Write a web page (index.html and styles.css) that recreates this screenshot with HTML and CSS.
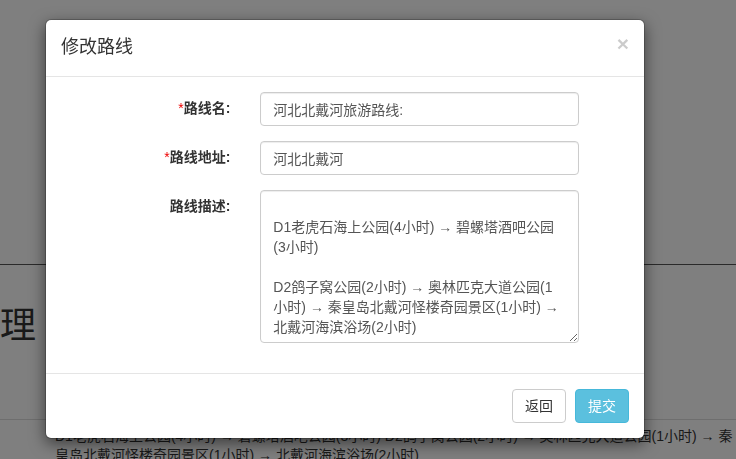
FILE: index.html
```html
<!DOCTYPE html>
<html lang="zh-CN">
<head>
<meta charset="utf-8">
<title>路线管理</title>
<link rel="stylesheet" href="styles.css">
</head>
<body>
<div class="page">
  <div class="page-top"></div>
  <h1 class="page-title">路线管理</h1>
  <table class="route-table">
    <tbody>
      <tr>
        <td>D1老虎石海上公园(4小时) → 碧螺塔酒吧公园(3小时) D2鸽子窝公园(2小时) → 奥林匹克大道公园(1小时) → 秦<br>皇岛北戴河怪楼奇园景区(1小时) → 北戴河海滨浴场(2小时)</td>
      </tr>
    </tbody>
  </table>
</div>

<div class="backdrop"></div>

<div class="modal">
  <div class="modal-header">
    <h4 class="modal-title">修改路线</h4>
    <button type="button" class="close">×</button>
  </div>
  <form class="modal-body">
    <div class="form-group">
      <label class="control-label"><span class="req">*</span>路线名:</label>
      <input class="form-control" type="text" value="河北北戴河旅游路线:">
    </div>
    <div class="form-group">
      <label class="control-label"><span class="req">*</span>路线地址:</label>
      <input class="form-control" type="text" value="河北北戴河">
    </div>
    <div class="form-group">
      <label class="control-label">路线描述:</label>
      <textarea class="form-control desc">

D1老虎石海上公园(4小时) → 碧螺塔酒吧公园
(3小时)

D2鸽子窝公园(2小时) → 奥林匹克大道公园(1
小时) → 秦皇岛北戴河怪楼奇园景区(1小时) →
北戴河海滨浴场(2小时)</textarea>
    </div>
  </form>
  <div class="modal-footer">
    <button type="button" class="btn btn-default">返回</button>
    <button type="button" class="btn btn-info">提交</button>
  </div>
</div>
</body>
</html>
```
FILE: styles.css
```css
* {
  box-sizing: border-box;
}

html, body {
  margin: 0;
  padding: 0;
  height: 100%;
  overflow: hidden;
}

body {
  font-family: "Liberation Sans", "Noto Sans CJK SC", sans-serif;
  font-size: 14px;
  line-height: 1.42857;
  color: #333;
  background: #fff;
}

/* page behind the dialog */
.page {
  width: 100%;
}

.page-top {
  height: 265px;
  border-bottom: 1px solid #555;
}

.page-title {
  margin: 41px 0 0 -108px;
  font-size: 36px;
  font-weight: 400;
  line-height: 40px;
  height: 113px;
  white-space: nowrap;
}

.route-table {
  border-collapse: collapse;
  border-top: 1px solid #ddd;
  width: 100%;
}

.route-table td {
  padding: 7px 0 0 55px;
  white-space: nowrap;
  line-height: 19px;
  color: #333;
}

/* overlay */
.backdrop {
  position: fixed;
  inset: 0;
  background: rgba(0, 0, 0, 0.5);
}

.modal {
  position: absolute;
  left: 45px;
  top: 19px;
  width: 600px;
  background: #fff;
  border: 1px solid rgba(0, 0, 0, 0.2);
  border-radius: 6px;
  box-shadow: 0 5px 15px rgba(0, 0, 0, 0.5);
  background-clip: padding-box;
}

.modal-header {
  display: flex;
  justify-content: space-between;
  align-items: flex-start;
  padding: 15px;
  border-bottom: 1px solid #e5e5e5;
}

.modal-title {
  margin: 0;
  font-size: 18px;
  font-weight: 400;
  line-height: 1.42857;
  color: #333;
}

.close {
  margin-top: -2px;
  padding: 0;
  border: 0;
  background: transparent;
  font-family: "Liberation Sans", sans-serif;
  font-size: 21px;
  font-weight: bold;
  line-height: 1;
  color: #000;
  opacity: 0.2;
  cursor: pointer;
}

.modal-body {
  display: block;
  margin: 0;
  padding: 15px;
}

.form-group {
  display: grid;
  grid-template-columns: 169.33px 318.83px;
  column-gap: 30px;
  margin-bottom: 15px;
}

.control-label {
  padding-top: 7px;
  text-align: right;
  font-weight: bold;
  color: #333;
}

.req {
  color: #e00;
  font-weight: normal;
}

.form-control {
  display: block;
  width: 100%;
  height: 34px;
  padding: 6px 12px;
  font-family: "Liberation Sans", "Noto Sans CJK SC", sans-serif;
  font-size: 14px;
  line-height: 20px;
  color: #555;
  background: #fff;
  border: 1px solid #ccc;
  border-radius: 4px;
  box-shadow: inset 0 1px 1px rgba(0, 0, 0, 0.075);
  margin: 0;
}

.desc {
  height: 153px;
  resize: vertical;
  overflow: hidden;
  white-space: pre-wrap;
}

.modal-footer {
  padding: 15px;
  text-align: right;
  border-top: 1px solid #e5e5e5;
}

.btn {
  display: inline-block;
  height: 34px;
  padding: 6px 12px;
  margin: 0;
  font-family: "Liberation Sans", "Noto Sans CJK SC", sans-serif;
  font-size: 14px;
  line-height: 20px;
  border: 1px solid transparent;
  border-radius: 4px;
  vertical-align: middle;
  cursor: pointer;
}

.btn + .btn {
  margin-left: 5px;
}

.btn-default {
  color: #333;
  background: #fff;
  border-color: #ccc;
}

.btn-info {
  color: #fff;
  background: #5bc0de;
  border-color: #46b8da;
}
```
